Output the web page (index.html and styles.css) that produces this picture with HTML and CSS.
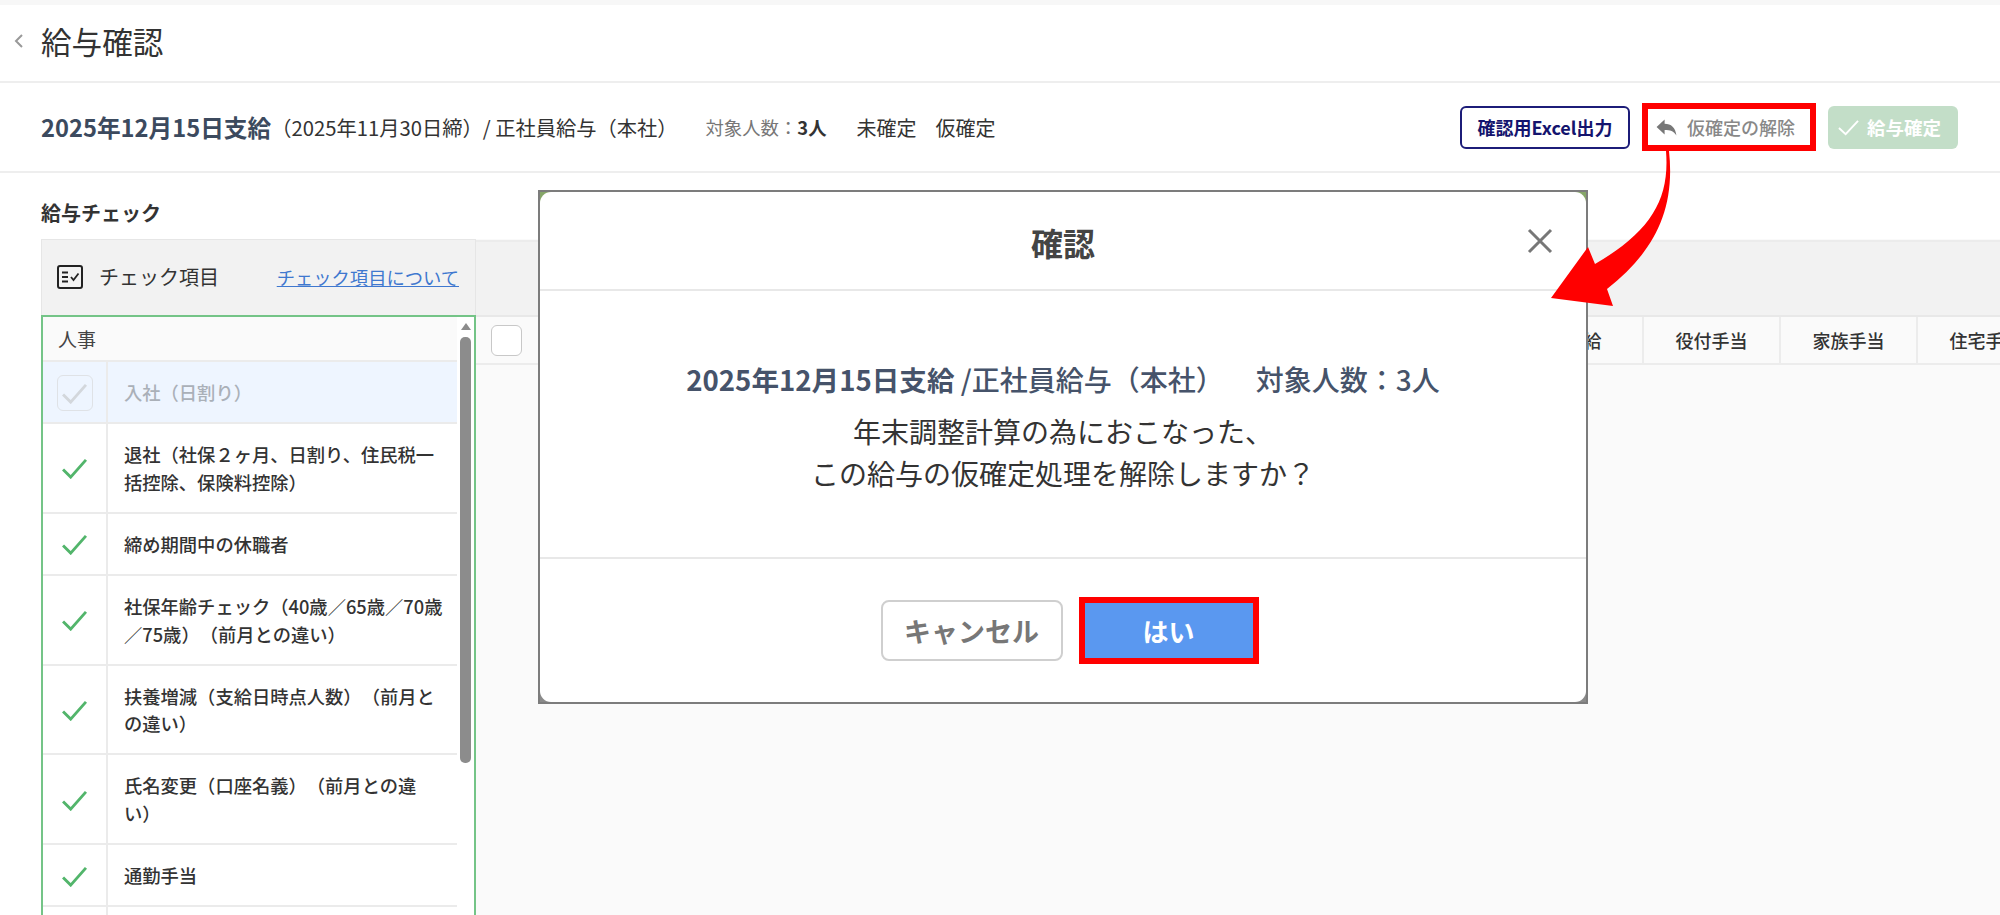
FILE: index.html
```html
<!DOCTYPE html>
<html lang="ja">

<head>
    <meta charset="UTF-8">
    <meta name="viewport" content="width=device-width, initial-scale=1.0">
    <title>給与確認</title>
    <link rel="stylesheet" href="styles.css">
</head>

<body>
    <div class="top_strip"></div>
    <div class="page_head">
        <svg class="back_icon" viewBox="0 0 12 16"><path d="M9 2 L3 8 L9 14" /></svg>
        <h1 class="page_title">給与確認</h1>
    </div>

    <div class="info_row">
        <div class="info_left">
            <span class="pay_date">2025年12月15日支給</span>
            <span class="pay_detail">（2025年11月30日締）/ 正社員給与（本社）</span>
            <span class="pay_count">対象人数：<b>3人</b></span>
            <span class="pay_state">未確定</span>
            <span class="pay_state">仮確定</span>
        </div>
        <div class="info_buttons">
            <div class="btn_excel">確認用Excel出力</div>
            <div class="btn_release">
                <svg class="reply_icon" viewBox="0 0 22 18"><path d="M0.5 8.5 L9 0.5 V5 C16 5 20.5 9 21.5 17.5 C18.5 12.5 15 11.6 9 11.6 V16.5 Z" /></svg>
                <span>仮確定の解除</span>
            </div>
            <div class="btn_confirm">
                <svg class="confirm_icon" viewBox="0 0 22 17"><path d="M1 9 L8 15.5 L21 1.5" /></svg>
                <span>給与確定</span>
            </div>
        </div>
    </div>

    <div class="check_section">
        <div class="check_title">給与チェック</div>
        <div class="check_body">
            <div class="check_panel">
                <div class="panel_head">
                    <svg class="list_icon" viewBox="0 0 26 24">
                        <rect x="1" y="1" width="24" height="22" rx="2" />
                        <path d="M5 7.5 H11 M5 12 H11 M5 16.5 H11 M14 12 L16.5 15 L21.5 8.5" />
                    </svg>
                    <span class="panel_name">チェック項目</span>
                    <a class="panel_link">チェック項目について</a>
                </div>
                <div class="panel_list">
                    <div class="list_rows">
                        <div class="group_row">人事</div>
                        <div class="item_row item_active">
                            <div class="item_mark">
                                <div class="mark_box"><svg class="mark_check mark_off" viewBox="0 0 28 22"><path d="M2 12 L10 20 L26 2" /></svg></div>
                            </div>
                            <div class="item_text">入社（日割り）</div>
                        </div>
                        <div class="item_row">
                            <div class="item_mark"><svg class="mark_check" viewBox="0 0 28 22"><path d="M2 12 L10 20 L26 2" /></svg></div>
                            <div class="item_text">退社（社保２ヶ月、日割り、住民税一括控除、保険料控除）</div>
                        </div>
                        <div class="item_row">
                            <div class="item_mark"><svg class="mark_check" viewBox="0 0 28 22"><path d="M2 12 L10 20 L26 2" /></svg></div>
                            <div class="item_text">締め期間中の休職者</div>
                        </div>
                        <div class="item_row">
                            <div class="item_mark"><svg class="mark_check" viewBox="0 0 28 22"><path d="M2 12 L10 20 L26 2" /></svg></div>
                            <div class="item_text">社保年齢チェック（40歳／65歳／70歳／75歳）（前月との違い）</div>
                        </div>
                        <div class="item_row">
                            <div class="item_mark"><svg class="mark_check" viewBox="0 0 28 22"><path d="M2 12 L10 20 L26 2" /></svg></div>
                            <div class="item_text">扶養増減（支給日時点人数）（前月との違い）</div>
                        </div>
                        <div class="item_row">
                            <div class="item_mark"><svg class="mark_check" viewBox="0 0 28 22"><path d="M2 12 L10 20 L26 2" /></svg></div>
                            <div class="item_text">氏名変更（口座名義）（前月との違い）</div>
                        </div>
                        <div class="item_row">
                            <div class="item_mark"><svg class="mark_check" viewBox="0 0 28 22"><path d="M2 12 L10 20 L26 2" /></svg></div>
                            <div class="item_text">通勤手当</div>
                        </div>
                        <div class="item_row">
                            <div class="item_mark"></div>
                            <div class="item_text"></div>
                        </div>
                    </div>
                    <div class="list_scroll">
                        <div class="scroll_arrow"></div>
                        <div class="scroll_thumb"></div>
                    </div>
                </div>
            </div>

            <div class="table_area">
                <div class="table_bar"></div>
                <div class="table_head">
                    <div class="head_check"><div class="head_box"></div></div>
                    <div class="head_cell">基本給</div>
                    <div class="head_cell">役付手当</div>
                    <div class="head_cell">家族手当</div>
                    <div class="head_cell">住宅手当</div>
                </div>
            </div>
        </div>
    </div>

    <!-- confirm dialog -->
    <div class="modal_frame">
        <div class="modal">
            <div class="modal_head">
                <div class="modal_title">確認</div>
                <svg class="modal_close" viewBox="0 0 26 26"><path d="M2 2 L24 24 M24 2 L2 24" /></svg>
            </div>
            <div class="modal_body">
                <div class="modal_summary">
                    <b>2025年12月15日支給</b> /正社員給与（本社）<span class="modal_count">対象人数：3人</span>
                </div>
                <div class="modal_message">年末調整計算の為におこなった、<br>この給与の仮確定処理を解除しますか？</div>
            </div>
            <div class="modal_foot">
                <div class="btn_cancel">キャンセル</div>
                <div class="btn_yes_mark">
                    <div class="btn_yes">はい</div>
                </div>
            </div>
        </div>
    </div>

    <!-- red annotation arrow -->
    <svg class="note_arrow" viewBox="0 0 2000 915">
        <path d="M1666 151 H1669 C1676 215 1650 255 1607 289 L1613 306 L1551 298 L1588 247 L1595 264 C1650 232 1670 200 1666 151 Z" />
    </svg>
</body>

</html>
```

FILE: styles.css
```css
* {
    box-sizing: border-box;
}

body {
    margin: 0;
    height: 915px;
    overflow: hidden;
    position: relative;
    background-color: white;
    color: #333;
    font-family: "Noto Sans CJK JP", "Noto Sans", sans-serif;
    text-spacing-trim: space-all;
}

.top_strip {
    height: 5px;
    background-color: #f7f7f7;
}

.page_head {
    height: 78px;
    padding: 0 0 4px 13px;
    display: flex;
    align-items: center;
    gap: 16px;
    border-bottom: 2px solid #eee;
}

.back_icon {
    width: 12px;
    height: 16px;
}

.back_icon path {
    fill: none;
    stroke: #999;
    stroke-width: 2;
}

.page_title {
    margin: 0;
    font-size: 30.6px;
    font-weight: 400;
}

.info_row {
    height: 90px;
    padding: 0 42px 0 41px;
    display: flex;
    align-items: center;
    justify-content: space-between;
    border-bottom: 2px solid #eee;
}

.info_left {
    display: flex;
    align-items: center;
    font-size: 20px;
}

.pay_date {
    font-size: 23.7px;
    font-weight: 700;
    color: #3c4a5e;
}

.pay_detail {
    font-size: 20.25px;
}

.pay_count {
    margin-left: 28px;
    margin-right: 30px;
    font-size: 18.4px;
    color: #777;
}

.pay_count b {
    color: #333;
}

.pay_state {
    margin-right: 19px;
    font-size: 20px;
}

.info_buttons {
    display: flex;
    align-items: center;
    gap: 12px;
}

.btn_excel {
    width: 170px;
    height: 43px;
    display: flex;
    align-items: center;
    justify-content: center;
    border: 2px solid #1c1c78;
    border-radius: 6px;
    color: #14146e;
    font-size: 18px;
    font-weight: 700;
}

.btn_release {
    width: 174px;
    height: 48px;
    padding-left: 8px;
    display: flex;
    align-items: center;
    gap: 10px;
    border: 6px solid #f00;
    color: #888;
    font-size: 18px;
    font-weight: 500;
}

.reply_icon {
    width: 21px;
    height: 17px;
    fill: #777;
}

.btn_confirm {
    width: 130px;
    height: 43px;
    padding-left: 10px;
    display: flex;
    align-items: center;
    gap: 8px;
    border-radius: 6px;
    background-color: #c3dec8;
    color: white;
    font-size: 18.5px;
    font-weight: 700;
}

.confirm_icon {
    width: 21px;
    height: 17px;
}

.confirm_icon path {
    fill: none;
    stroke: white;
    stroke-width: 2;
}

.check_section {
    height: 743px;
    display: flex;
    flex-direction: column;
}

.check_title {
    height: 66px;
    padding: 25px 0 0 41px;
    font-size: 20px;
    line-height: 30px;
    font-weight: 700;
}

.check_body {
    flex: 1;
    padding-left: 41px;
    display: flex;
    min-height: 0;
}

.check_panel {
    width: 435px;
    flex-shrink: 0;
    display: flex;
    flex-direction: column;
}

.panel_head {
    height: 76px;
    padding: 0 16px 2px 15px;
    display: flex;
    align-items: center;
    background-color: #f2f2f2;
    border: 1px solid #e6e6e6;
    border-bottom: none;
}

.list_icon {
    width: 26px;
    height: 24px;
    margin-right: 16px;
}

.list_icon rect {
    fill: none;
    stroke: #222;
    stroke-width: 2;
}

.list_icon path {
    fill: none;
    stroke: #222;
    stroke-width: 1.8;
}

.panel_name {
    font-size: 20px;
}

.panel_link {
    margin-left: auto;
    color: #3f78cf;
    font-size: 18.3px;
    text-decoration: underline;
}

.panel_list {
    flex: 1;
    min-height: 0;
    display: flex;
    overflow: hidden;
    border: 2px solid #74c487;
    border-bottom: none;
}

.list_rows {
    width: 414px;
    flex-shrink: 0;
}

.group_row {
    height: 45px;
    padding-left: 15px;
    display: flex;
    align-items: center;
    background-color: #fafafa;
    border-bottom: 2px solid #ebebeb;
    font-size: 19px;
    color: #444;
}

.item_row {
    display: flex;
    border-bottom: 2px solid #ebebeb;
}

.item_active {
    background-color: #eef5ff;
}

.item_mark {
    width: 65px;
    flex-shrink: 0;
    padding-top: 2px;
    display: flex;
    align-items: center;
    justify-content: center;
    border-right: 2px solid #ebebeb;
}

.mark_box {
    width: 36px;
    height: 36px;
    display: flex;
    align-items: center;
    justify-content: center;
    border: 1px solid #dfe2e6;
    border-radius: 6px;
}

.mark_check {
    width: 27px;
    height: 21px;
}

.mark_check path {
    fill: none;
    stroke: #52b56b;
    stroke-width: 3;
}

.mark_check.mark_off path {
    stroke: #d3d7dc;
}

.item_text {
    flex: 1;
    min-height: 60px;
    padding: 17.125px 12px 15.125px 16px;
    font-size: 18.3px;
    line-height: 27.75px;
    font-weight: 500;
}

.item_active .item_text {
    color: #aab0b8;
}

.list_scroll {
    flex: 1;
    padding: 6px 3px 0 3px;
}

.scroll_arrow {
    width: 0;
    margin: 0 auto 7px auto;
    border-left: 5.5px solid transparent;
    border-right: 5.5px solid transparent;
    border-bottom: 7px solid #8c8c8c;
}

.scroll_thumb {
    height: 426px;
    border-radius: 5px;
    background-color: #8c8c8c;
}

.table_area {
    flex: 1;
    min-width: 0;
    display: flex;
    flex-direction: column;
    background-color: #fafafa;
}

.table_bar {
    height: 77px;
    margin-top: 1px;
    background-color: #f2f2f2;
    border-top: 2px solid #ececec;
    border-bottom: 2px solid #e8e8e8;
}

.table_head {
    height: 48px;
    display: flex;
    border-bottom: 2px solid #ececec;
}

.head_check {
    width: 1031px;
    flex-shrink: 0;
    padding: 8px 0 0 15px;
}

.head_box {
    width: 31px;
    height: 31px;
    background-color: white;
    border: 1px solid #c8c8c8;
    border-radius: 6px;
}

.head_cell {
    width: 137px;
    flex-shrink: 0;
    display: flex;
    align-items: center;
    justify-content: center;
    border-right: 2px solid #ececec;
    font-size: 18px;
    font-weight: 500;
    white-space: nowrap;
}

.modal_frame {
    position: absolute;
    left: 538px;
    top: 190px;
    width: 1050px;
    height: 514px;
    background: linear-gradient(#86a668 0, #86a668 50%, #8a8a8a 50%);
    border: 2px solid #7c7c7c;
}

.modal {
    height: 100%;
    display: flex;
    flex-direction: column;
    border-radius: 11px;
    background-color: white;
}

.modal_head {
    height: 99px;
    flex-shrink: 0;
    padding-top: 3px;
    position: relative;
    display: flex;
    align-items: center;
    justify-content: center;
    border-bottom: 2px solid #e8e8e8;
}

.modal_title {
    font-size: 32px;
    font-weight: 700;
    color: #444;
}

.modal_close {
    position: absolute;
    right: 33px;
    top: 36px;
    width: 26px;
    height: 26px;
}

.modal_close path {
    fill: none;
    stroke: #777;
    stroke-width: 3;
}

.modal_body {
    height: 268px;
    flex-shrink: 0;
    padding-top: 64px;
    display: flex;
    flex-direction: column;
    align-items: center;
    border-bottom: 2px solid #e8e8e8;
}

.modal_summary {
    font-size: 28px;
    line-height: 48px;
    font-weight: 500;
    color: #46536a;
}

.modal_summary b {
    font-size: 27.6px;
}

.modal_count {
    margin-left: 32px;
}

.modal_message {
    margin-top: 7px;
    font-size: 28px;
    line-height: 42px;
    text-align: center;
    color: #333;
}

.modal_foot {
    flex: 1;
    padding: 38px 0 0 13px;
    display: flex;
    align-items: flex-start;
    justify-content: center;
    gap: 16px;
}

.btn_cancel {
    width: 182px;
    height: 61px;
    margin-top: 3px;
    display: flex;
    align-items: center;
    justify-content: center;
    border: 2px solid #cfcfcf;
    border-radius: 8px;
    color: #777;
    font-size: 27px;
    font-weight: 700;
}

.btn_yes_mark {
    width: 180px;
    height: 67px;
    border: 6px solid #f00;
}

.btn_yes {
    height: 100%;
    display: flex;
    align-items: center;
    justify-content: center;
    background-color: #5a98f0;
    color: white;
    font-size: 26px;
    font-weight: 700;
}

.note_arrow {
    position: absolute;
    left: 0;
    top: 0;
    width: 2000px;
    height: 915px;
    fill: #f00;
    pointer-events: none;
}
```
